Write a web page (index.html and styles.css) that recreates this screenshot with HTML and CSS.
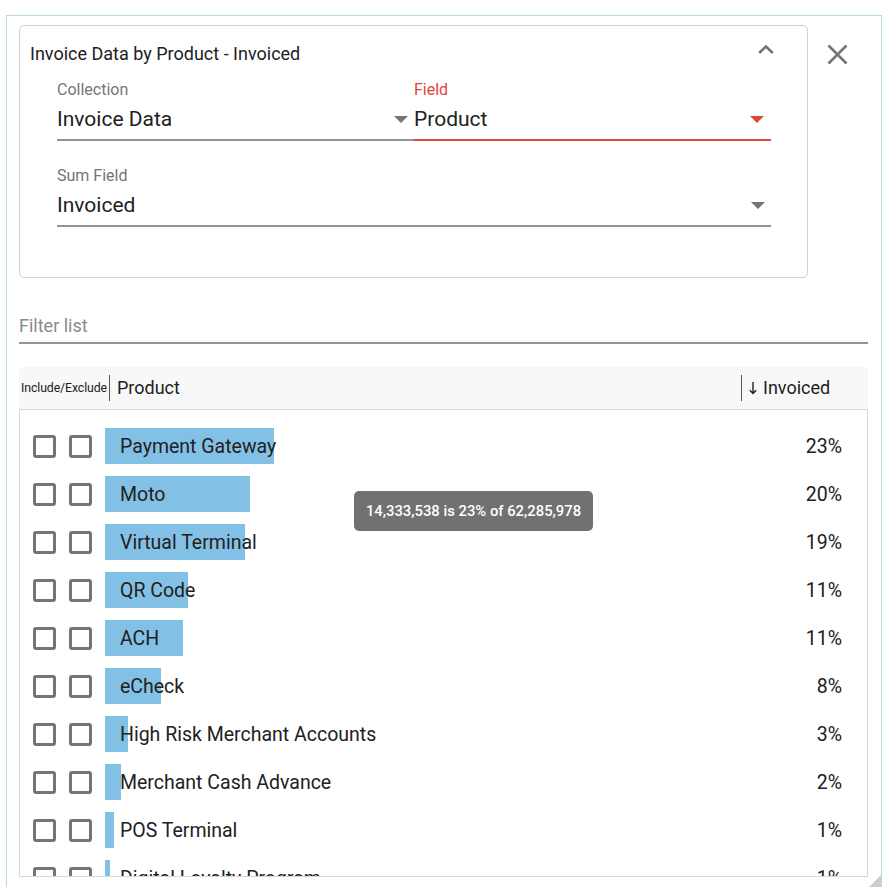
FILE: index.html
```html
<!DOCTYPE html>
<html lang="en">
<head>
<meta charset="utf-8">
<title>Invoice Data by Product - Invoiced</title>
<link rel="stylesheet" href="styles.css">
</head>
<body>
<div class="panel">
  <div class="top-row">
    <section class="card">
      <div class="card-head">
        <h1 class="card-title">Invoice Data by Product - Invoiced</h1>
        <svg class="chevron" width="16" height="9" viewBox="0 0 16 9"><polyline points="1.2,8 8,1.5 14.8,8" fill="none" stroke="#757575" stroke-width="2.6"/></svg>
      </div>
      <div class="fields">
        <div class="field-row">
          <div class="field">
            <div class="field-label">Collection</div>
            <div class="field-value"><span>Invoice Data</span><i class="caret"></i></div>
          </div>
          <div class="field field-active">
            <div class="field-label">Field</div>
            <div class="field-value"><span>Product</span><i class="caret"></i></div>
          </div>
        </div>
        <div class="field-row field-row-2">
          <div class="field">
            <div class="field-label">Sum Field</div>
            <div class="field-value"><span>Invoiced</span><i class="caret"></i></div>
          </div>
        </div>
      </div>
    </section>
    <svg class="close" width="21" height="21" viewBox="0 0 21 21"><path d="M1.5 1.5L19.5 19.5M19.5 1.5L1.5 19.5" stroke="#757575" stroke-width="2.6" fill="none"/></svg>
  </div>

  <div class="filter">Filter list</div>

  <div class="table-head">
    <div class="th th-include">Include/Exclude</div>
    <div class="th th-product">Product</div>
    <div class="th th-value"><svg class="sort-arrow" width="8" height="14" viewBox="0 0 8 14"><path d="M4 1V12.5M0.8 9.2L4 12.6L7.2 9.2" stroke="#212121" stroke-width="1.4" fill="none"/></svg> Invoiced</div>
  </div>

  <div class="table-body">
    <div class="row"><span class="box"></span><span class="box"></span><div class="name" style="--w:169px">Payment Gateway</div><div class="pct">23%</div></div>
    <div class="row"><span class="box"></span><span class="box"></span><div class="name" style="--w:145px">Moto</div><div class="pct">20%</div></div>
    <div class="row"><span class="box"></span><span class="box"></span><div class="name" style="--w:140px">Virtual Terminal</div><div class="pct">19%</div></div>
    <div class="row"><span class="box"></span><span class="box"></span><div class="name" style="--w:83px">QR Code</div><div class="pct">11%</div></div>
    <div class="row"><span class="box"></span><span class="box"></span><div class="name" style="--w:78px">ACH</div><div class="pct">11%</div></div>
    <div class="row"><span class="box"></span><span class="box"></span><div class="name" style="--w:56px">eCheck</div><div class="pct">8%</div></div>
    <div class="row"><span class="box"></span><span class="box"></span><div class="name" style="--w:23px">High Risk Merchant Accounts</div><div class="pct">3%</div></div>
    <div class="row"><span class="box"></span><span class="box"></span><div class="name" style="--w:16px">Merchant Cash Advance</div><div class="pct">2%</div></div>
    <div class="row"><span class="box"></span><span class="box"></span><div class="name" style="--w:9px">POS Terminal</div><div class="pct">1%</div></div>
    <div class="row"><span class="box"></span><span class="box"></span><div class="name" style="--w:5px">Digital Loyalty Program</div><div class="pct">1%</div></div>
  </div>

  <div class="tooltip">14,333,538 is 23% of 62,285,978</div>
  <svg class="grip" width="12" height="12" viewBox="0 0 12 12"><polygon points="0,12 12,0 12,12" fill="#cdcdcd"/></svg>
</div>
</body>
</html>
```

FILE: styles.css
```css
* { box-sizing: border-box; }

html, body {
  margin: 0;
  padding: 0;
  background: #ffffff;
  font-family: Roboto, "Noto Sans", "Liberation Sans", sans-serif;
  color: #212121;
  overflow: hidden;
}

.panel {
  position: relative;
  margin: 15px 0 0 6px;
  width: 876px;
  height: 873px;
  border: 1px solid #b9dbe4;
  padding: 9px 0 0 12px;
}

.top-row {
  display: flex;
  align-items: flex-start;
}

.card {
  width: 789px;
  height: 253px;
  border: 1px solid #d0d0d0;
  border-radius: 5px;
}

.card-head {
  display: flex;
  align-items: flex-start;
  padding: 16px 33px 0 10px;
}

.card-title {
  flex: 1;
  margin: 0;
  font-size: 18px;
  font-weight: 400;
  line-height: 24px;
  color: #212121;
}

.chevron {
  margin-top: 3px;
  display: block;
}

.close {
  display: block;
  margin: 19px 0 0 19px;
}

.fields {
  margin: 14px 0 0 37px;
  width: 714px;
}

.field-row {
  display: flex;
}

.field-row-2 {
  margin-top: 25px;
}

.field {
  flex: 1;
}

.field-label {
  font-size: 16px;
  line-height: 20px;
  color: #757575;
}

.field-value {
  display: flex;
  align-items: center;
  height: 41px;
  font-size: 21px;
  line-height: 39px;
  border-bottom: 2px solid #929292;
  padding-right: 6px;
}

.field-value span {
  flex: 1;
}

.caret {
  display: block;
  width: 0;
  height: 0;
  border-left: 7px solid transparent;
  border-right: 7px solid transparent;
  border-top: 7px solid #757575;
}

.field-active .field-label { color: #e0443b; }
.field-active .field-value { border-bottom-color: #dc4a41; padding-right: 7px; }
.field-active .caret { border-top-color: #e0443b; }

.filter {
  margin-top: 32px;
  width: 849px;
  height: 34px;
  font-size: 18px;
  line-height: 32px;
  color: #8a8a8a;
  border-bottom: 2px solid #949494;
}

.table-head {
  margin-top: 23px;
  width: 849px;
  height: 42px;
  background: #f8f8f8;
  display: flex;
  align-items: center;
}

.th {
  line-height: 26px;
  height: 26px;
  white-space: nowrap;
}

.th-include {
  width: 90px;
  padding-left: 2px;
  font-size: 12.3px;
  letter-spacing: -0.1px;
}

.th-product {
  width: 632px;
  border-left: 1px solid #555;
  padding-left: 7px;
  font-size: 18px;
}

.th-value {
  flex: 1;
  border-left: 1px solid #555;
  padding-left: 7px;
  font-size: 18px;
  display: flex;
  align-items: center;
  gap: 6px;
}

.sort-arrow { display: block; }

.table-body {
  width: 849px;
  height: 468px;
  border: 1px solid #d8d8d8;
  padding-top: 12px;
  overflow: hidden;
}

.row {
  display: flex;
  align-items: center;
  height: 48px;
  padding: 0 25px 0 13px;
  gap: 13px;
}

.box {
  flex: none;
  width: 23px;
  height: 23px;
  border: 3px solid #757575;
  border-radius: 3px;
}

.name {
  flex: 1;
  height: 36px;
  line-height: 38px;
  padding-left: 15px;
  font-size: 19.5px;
  white-space: nowrap;
  background-image: linear-gradient(#83c0e5, #83c0e5);
  background-repeat: no-repeat;
  background-size: var(--w) 100%;
}

.pct {
  height: 36px;
  font-size: 19.5px;
  line-height: 38px;
  text-align: right;
}

.tooltip {
  position: absolute;
  left: 347px;
  top: 475px;
  height: 40px;
  width: 239px;
  text-align: center;
  line-height: 40px;
  border-radius: 5px;
  background: #717171;
  color: #ffffff;
  font-size: 14.8px;
  font-weight: 500;
}

.grip {
  position: absolute;
  right: 0;
  bottom: 0;
  display: block;
}
```
